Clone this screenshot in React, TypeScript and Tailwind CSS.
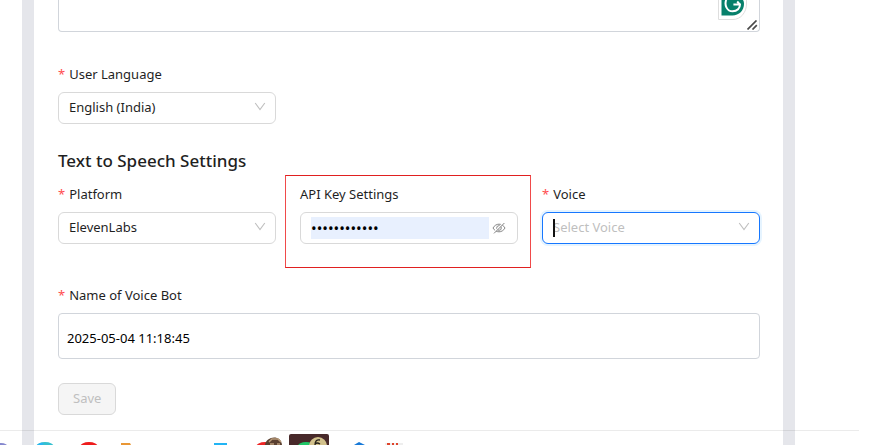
import type { ReactNode } from "react";

interface FieldProps {
  id: string;
  label: string;
  required?: boolean;
  children: ReactNode;
}

function Field({ id, label, required = true, children }: FieldProps) {
  return (
    <div className="flex flex-col gap-[7px]">
      <label htmlFor={id} className="flex gap-1 text-[13px] leading-[22px] text-[#1f1f1f]">
        {required && <span className="text-[#ff4d4f]">*</span>}
        {label}
      </label>
      {children}
    </div>
  );
}

function Chevron() {
  return (
    <svg
      className="pointer-events-none absolute right-[10px] top-[9px] h-3 w-3"
      viewBox="0 0 12 12"
      fill="none"
      stroke="#bfbfbf"
      strokeWidth="1.1"
    >
      <path d="M1.2 2 L6 8.6 L10.8 2" />
    </svg>
  );
}

interface SelectBoxProps {
  id: string;
  value: string;
  focused?: boolean;
}

function SelectBox({ id, value, focused }: SelectBoxProps) {
  return (
    <div className="relative">
      <select
        id={id}
        defaultValue={value}
        className={
          focused
            ? "block h-8 w-full appearance-none rounded-md border border-[#1677ff] bg-white px-[10px] text-[13px] text-[#bfbfbf] shadow-[0_0_0_2px_rgba(5,145,255,0.1)] outline-none"
            : "block h-8 w-full appearance-none rounded-md border border-[#d9d9d9] bg-white px-[10px] text-[13px] text-[#1f1f1f] outline-none"
        }
      >
        <option>{value}</option>
      </select>
      {focused && <span className="absolute left-[11px] top-[7px] h-[18px] w-[2px] bg-[#111111]" />}
      <Chevron />
    </div>
  );
}

function EyeOff() {
  return (
    <svg viewBox="0 0 14 14" className="h-[14px] w-[14px]" fill="none" stroke="#858585" strokeWidth="1">
      <path d="M1 7 C3.8 1.9 10.2 1.9 13 7 C10.2 12.1 3.8 12.1 1 7 Z" />
      <circle cx="7" cy="7" r="2.3" />
      <path d="M1.8 11.6 L11.4 2" stroke="#ffffff" strokeWidth="1.2" />
      <path d="M2 12.4 L12.4 2" />
    </svg>
  );
}

function GrammarBadge() {
  return (
    <svg className="absolute right-[13px] top-0 h-5 w-[29px]" viewBox="0 0 29 20">
      <path d="M0.5 0 V19.5 H15 C23 19.5 28.5 12 28.5 4 V0" fill="#ffffff" stroke="#dedede" />
      <path d="M3.5 0 V15.5 H14.5 C21 15.5 26 10.5 26 4 C26 2.4 25.6 1 25 0 Z" fill="#07806b" />
      <path
        d="M8.2 0 C6.2 5.2 9 11.3 14.6 11.3 C19.3 11.3 22 8 22 4.6 H15.4 M19.2 1.5 L22 4.6"
        fill="none"
        stroke="#ffffff"
        strokeWidth="2"
      />
    </svg>
  );
}

function ResizeGrip() {
  return (
    <svg className="absolute bottom-[2px] right-[2px] h-[10px] w-[11px]" viewBox="0 0 11 10" stroke="#4a4a4a" strokeWidth="1.7">
      <path d="M0.5 9.5 L9.5 0.5 M5.5 9.5 L9.8 5.2" />
    </svg>
  );
}

function Dock() {
  return (
    <div className="absolute bottom-0 left-0 right-[22px] h-[15px] border-t border-black/8">
      <svg className="block h-[14px] w-[420px]" viewBox="0 0 420 14">
        <ellipse cx="1" cy="16" rx="7" ry="4" fill="#8588ce" />
        <ellipse cx="45" cy="16" rx="9" ry="5" fill="#35c0cf" />
        <path d="M37 14 L40 12 H44 L42 14 Z" fill="#28b4f5" />
        <ellipse cx="89" cy="16" rx="9" ry="5" fill="#ee1c1c" />
        <path d="M121 14 V12 H130 L131 14 Z" fill="#e99735" />
        <path d="M214 14 V12 H227 V14 Z" fill="#22b4f4" />
        <ellipse cx="265" cy="16" rx="9" ry="5" fill="#ee2525" />
        <path d="M265 14 C266 5 281 3 282 14 Z" fill="#5b4030" />
        <path d="M269 11 L272 8 L278 8 L281 11 M270 13 H274 M277 13 H280" stroke="#b99b7a" strokeWidth="1.5" fill="none" />
        <path d="M289 14 V5 Q289 3 291 3 H327 Q329 3 329 5 V14 Z" fill="#48292a" />
        <ellipse cx="306" cy="15" rx="8" ry="4" fill="#20c868" />
        <circle cx="318" cy="15" r="9" fill="#d2c18c" />
        <path d="M320 9 Q315 8 315 14 M315 13 Q317 11 320 13" stroke="#252018" strokeWidth="1.3" fill="none" />
        <path d="M354 14 L359 11 L365 14 Z" fill="#1679d8" />
        <path d="M385 12 H403 V14 H385 Z" fill="#eeeeee" />
        <path d="M387 13 H390 M392 13 H394 M396 13 H398" stroke="#df442b" strokeWidth="2" />
      </svg>
    </div>
  );
}

export default function App() {
  return (
    <div
      className="relative h-screen overflow-hidden bg-white"
      style={{ fontFamily: '"Noto Sans", "Open Sans", sans-serif' }}
    >
      <main className="ml-[22px] mr-[86px] h-full border-x-[12px] border-[#e5e6eb] pl-6 pr-[23px]">
        <div className="relative">
          <textarea
            aria-label="Prompt"
            className="block h-8 w-full resize-none rounded-b border border-t-0 border-[#d1d5db] outline-none"
          />
          <GrammarBadge />
          <ResizeGrip />
        </div>

        <form className="mt-[31px]">
          <div className="grid grid-cols-3 gap-6">
            <Field id="language" label="User Language">
              <SelectBox id="language" value="English (India)" />
            </Field>
          </div>

          <h2 className="mt-[23px] text-[17px] font-medium leading-7 text-[#1f1f1f]">Text to Speech Settings</h2>

          <div className="mt-2 grid grid-cols-3 gap-6">
            <Field id="platform" label="Platform">
              <SelectBox id="platform" value="ElevenLabs" />
            </Field>
            <div className="relative">
              <Field id="api-key" label="API Key Settings" required={false}>
                <div className="flex h-8 items-center rounded-md border border-[#d9d9d9] pl-[10px] pr-[11px]">
                  <input
                    id="api-key"
                    type="password"
                    defaultValue="voicebot2025"
                    className="mr-[3px] h-[22px] min-w-0 flex-1 bg-[#e8f0fe] text-[15px] text-black outline-none"
                  />
                  <button type="button" aria-label="Show API key">
                    <EyeOff />
                  </button>
                </div>
              </Field>
              <div className="pointer-events-none absolute -bottom-6 -left-[15px] -right-[13px] -top-2 border border-x-[#f04a4a] border-y-[#e02020]" />
            </div>
            <Field id="voice" label="Voice">
              <SelectBox id="voice" value="Select Voice" focused />
            </Field>
          </div>

          <div className="mt-10">
            <Field id="bot-name" label="Name of Voice Bot">
              <input
                id="bot-name"
                defaultValue="2025-05-04 11:18:45"
                className="h-[46px] w-full rounded border border-[#d1d5db] px-2 pt-[3px] text-[13px] text-black outline-none"
              />
            </Field>
          </div>

          <button
            type="submit"
            disabled
            className="mt-6 h-8 rounded-md border border-[#d9d9d9] bg-[#f5f5f5] px-[14px] text-[13px] text-[#bfbfbf]"
          >
            Save
          </button>
        </form>
      </main>
      <Dock />
    </div>
  );
}
